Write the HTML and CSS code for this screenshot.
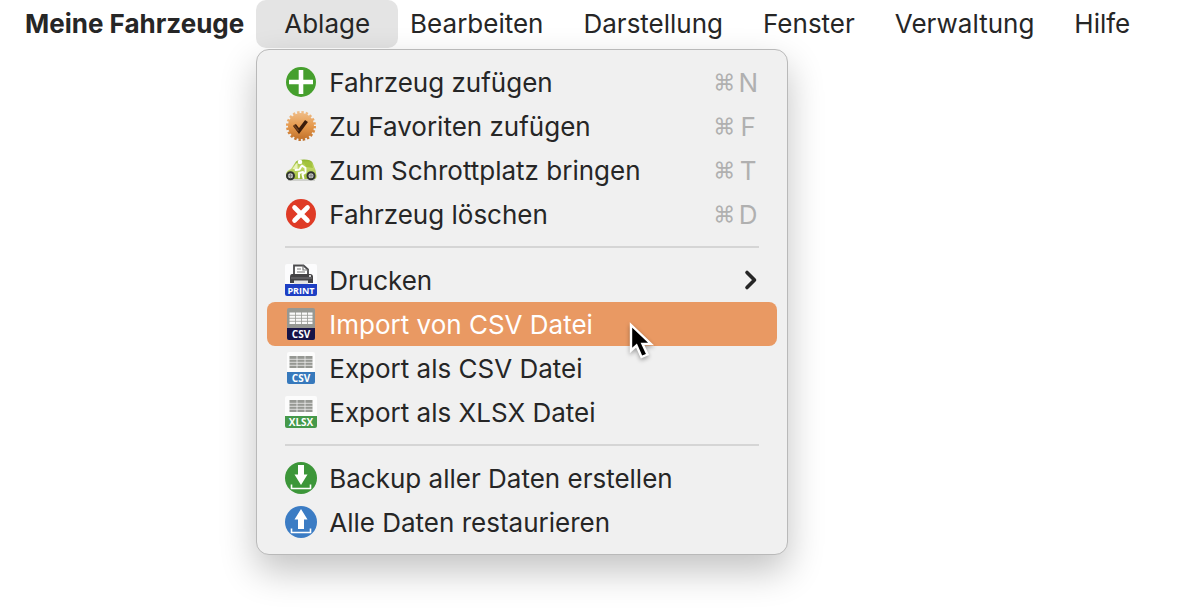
FILE: index.html
```html
<!DOCTYPE html>
<html lang="de">
<head>
<meta charset="utf-8">
<meta name="viewport" content="width=device-width, initial-scale=1">
<title>Meine Fahrzeuge</title>
<link rel="stylesheet" href="styles.css">
</head>
<body>
<nav class="menubar" aria-label="Hauptmenü">
  <button class="bar-item app-name" type="button">Meine Fahrzeuge</button>
  <div class="bar-group">
    <button class="bar-item active" type="button" aria-haspopup="true" aria-expanded="true">Ablage</button>
    <div class="menu" role="menu">
      <button class="item" type="button" role="menuitem">
        <svg class="icon" viewBox="0 0 32 32" aria-hidden="true"><circle cx="16" cy="16" r="15" fill="#459f2d"/><path d="M16 4v24M4 16h24" stroke="#fff" stroke-width="4.6"/></svg>
        <span class="label">Fahrzeug zufügen</span><span class="keys"><span class="command">⌘</span><span class="key">N</span></span>
      </button>
      <button class="item" type="button" role="menuitem">
        <svg class="icon" viewBox="0 0 32 32" aria-hidden="true">
          <defs><linearGradient id="seal" gradientUnits="userSpaceOnUse" x1="0" y1="2" x2="0" y2="30"><stop offset="0" stop-color="#efbd88"/><stop offset=".5" stop-color="#e5994d"/><stop offset="1" stop-color="#c0702a"/></linearGradient></defs>
          <circle cx="16" cy="16" r="13" fill="url(#seal)"/>
          <circle cx="16" cy="16" r="13.5" fill="none" stroke="url(#seal)" stroke-width="3" stroke-dasharray="2.4 1.839"/>
          <path d="M9.5 15l4.500 6L21.500 11" fill="none" stroke="#3b1d0b" stroke-width="3.6"/>
          <path d="M9 15l4.500 6" fill="none" stroke="#70401f" stroke-width="1.5"/>
        </svg>
        <span class="label">Zu Favoriten zufügen</span><span class="keys"><span class="command">⌘</span><span class="key">F</span></span>
      </button>
      <button class="item" type="button" role="menuitem">
        <svg class="icon" viewBox="0 0 32 32" aria-hidden="true">
          <defs><linearGradient id="car" x1="0" y1="0" x2="0" y2="1"><stop offset="0" stop-color="#8fb52c"/><stop offset=".4" stop-color="#c3d96a"/><stop offset="1" stop-color="#9dba3c"/></linearGradient></defs>
          <path d="M1 20Q1.500 16.500 6 15l5-7.500Q13 5.500 19 5.500q7 0 8.500 3L30.500 16l1 6q0 3-2 3H3q-2 0-2-5z" fill="url(#car)"/>
          <path d="M7.500 15L11 9.500l1.500-.5v6z" fill="#e9f3bb"/>
          <path d="M19 8q6-1 7.500 1.500l1.500 4.500-7-1z" fill="#a3c33d"/>
          <circle cx="15" cy="8" r="2.300" fill="#fff"/>
          <path d="M17 11.500l3.500 2.500v4.500l-3 2 1 4M16.500 12l-2 3.500-4 .5M18 18l-4 1v4.500" fill="none" stroke="#fff" stroke-width="1.900" stroke-linecap="round" stroke-linejoin="round"/>
          <path d="M3 26h27" stroke="#aeb0a9" stroke-width="1"/>
          <g fill="#c8cac6" stroke="#303330" stroke-width="2"><circle cx="5.500" cy="21.800" r="3.500"/><circle cx="26" cy="21.800" r="3.500"/></g>
          <path d="M5.500 19.500v4.600M3.200 21.800h4.600M26 19.500v4.600M23.700 21.800h4.600" stroke="#777" stroke-width=".8"/>
        </svg>
        <span class="label">Zum Schrottplatz bringen</span><span class="keys"><span class="command">⌘</span><span class="key">T</span></span>
      </button>
      <button class="item" type="button" role="menuitem">
        <svg class="icon" viewBox="0 0 32 32" aria-hidden="true"><circle cx="16" cy="16" r="15" fill="#df3b26"/><path d="M9.500 9.500l13 13m0-13l-13 13" stroke="#fff" stroke-width="4.600" stroke-linecap="round"/></svg>
        <span class="label">Fahrzeug löschen</span><span class="keys"><span class="command">⌘</span><span class="key">D</span></span>
      </button>
      <hr class="rule">
      <button class="item" type="button" role="menuitem" aria-haspopup="true">
        <svg class="icon" viewBox="0 0 32 32" aria-hidden="true">
          <rect width="32" height="32" rx="2" fill="#fcfcfd"/>
          <path d="M9 10V1.500h9.500L23 5.500V10" fill="#fff" stroke="#4b4b4d" stroke-width="1.800"/>
          <path d="M18 1.500V6h5M12 5h4M12 8h8" fill="none" stroke="#777" stroke-width="1.200"/>
          <path d="M7 10h18q3 0 3 3v6H5v-6q0-3 2-3z" fill="#444345"/><path d="M6 14h21" stroke="#77777a"/>
          <circle cx="25" cy="12" r="1" fill="#fff"/><path d="M9 16.500h14V20H9z" fill="#e2e2e2"/>
          <path d="M0 20h32v10q0 2-2 2H2q-2 0-2-2z" fill="#1e3fc4"/>
          <text class="badge" x="16" y="29.500" font-size="9">PRINT</text>
        </svg>
        <span class="label">Drucken</span>
        <svg class="chevron" viewBox="0 0 16 22" aria-hidden="true"><path d="M4 3.500l7.500 7.500L4 18.500" fill="none" stroke="#262626" stroke-width="3.600" stroke-linecap="round" stroke-linejoin="round"/></svg>
      </button>
      <button class="item selected" type="button" role="menuitem">
        <svg class="icon" viewBox="0 0 32 32" aria-hidden="true">
          <rect x="2" width="28" height="32" rx="2" fill="#969893"/>
          <path d="M4.500 4.500h23v11.500h-23z" fill="#fafafa"/>
          <path d="M4 7.300h24M4 10.300h24M4 13.300h24M10.500 4v12M16.500 4v12M22.500 4v12" stroke="#969893" stroke-width=".8"/>
          <path d="M2 20h28v10q0 2-2 2H4q-2 0-2-2z" fill="#161447"/>
          <text class="badge" x="16" y="29.500" font-size="10">CSV</text>
        </svg>
        <span class="label">Import von CSV Datei</span>
        <svg class="cursor" viewBox="0 0 28 44" aria-hidden="true"><path d="M3 4v25.500l5.500-5 5 11.500 6-2.500L14.500 23h8.500z" fill="#000" stroke="#fff" stroke-width="2.400"/></svg>
      </button>
      <button class="item" type="button" role="menuitem">
        <svg class="icon" viewBox="0 0 32 32" aria-hidden="true">
          <rect x="2" width="28" height="32" rx="2" fill="#fcfcfc"/>
          <path d="M4.500 4h23v12h-23z" fill="#969893"/><path d="M4 7.300h24M4 10.300h24M4 13.300h24M12 4v12M20 4v12" stroke="#eee" stroke-width=".8"/>
          <path d="M2 20h28v10q0 2-2 2H4q-2 0-2-2z" fill="#3779bc"/>
          <text class="badge" x="16" y="29.500" font-size="10">CSV</text>
        </svg>
        <span class="label">Export als CSV Datei</span>
      </button>
      <button class="item" type="button" role="menuitem">
        <svg class="icon" viewBox="0 0 32 32" aria-hidden="true">
          <rect width="32" height="32" rx="2" fill="#fcfcfc"/>
          <path d="M4.500 4h23v12h-23z" fill="#969893"/><path d="M4 7.300h24M4 10.300h24M4 13.300h24M12 4v12M20 4v12" stroke="#eee" stroke-width=".8"/>
          <path d="M0 20h32v10q0 2-2 2H2q-2 0-2-2z" fill="#45994a"/>
          <text class="badge" x="16" y="29.500" font-size="10">XLSX</text>
        </svg>
        <span class="label">Export als XLSX Datei</span>
      </button>
      <hr class="rule">
      <button class="item" type="button" role="menuitem">
        <svg class="icon" viewBox="0 0 32 32" aria-hidden="true"><circle cx="16" cy="16" r="16" fill="#3c9639"/><path d="M13 3h6v9.500h3.500L16 23 9.500 12.500H13z" fill="#fff"/><path d="M6.500 22.500v4h19v-4" fill="none" stroke="#fff" stroke-width="1.600"/></svg>
        <span class="label">Backup aller Daten erstellen</span>
      </button>
      <button class="item" type="button" role="menuitem">
        <svg class="icon" viewBox="0 0 32 32" aria-hidden="true"><circle cx="16" cy="16" r="16" fill="#3b7cc4"/><path d="M16 3l6.500 10.500H19V23h-6v-9.500H9.500z" fill="#fff"/><path d="M6.500 22.500v4h19v-4" fill="none" stroke="#fff" stroke-width="1.600"/></svg>
        <span class="label">Alle Daten restaurieren</span>
      </button>
    </div>
  </div>
  <button class="bar-item" type="button">Bearbeiten</button>
  <button class="bar-item" type="button">Darstellung</button>
  <button class="bar-item" type="button">Fenster</button>
  <button class="bar-item" type="button">Verwaltung</button>
  <button class="bar-item" type="button">Hilfe</button>
</nav>
</body>
</html>
```
FILE: styles.css
```css
* {
  box-sizing: border-box;
}

body {
  min-height: 100vh;
  margin: 0;
  background: #fff;
  color: #262626;
  font-family: Inter, "Liberation Sans", sans-serif;
  font-size: 26px;
}

button {
  border: 0;
  background: none;
  color: inherit;
  font: inherit;
  white-space: nowrap;
}

.menubar {
  display: flex;
  padding-left: 5px;
}

.bar-item {
  height: 48px;
  padding: 0 20px 2px;
}

.app-name {
  font-weight: 700;
}

.bar-group {
  position: relative;
  margin: 0 -8px;
}

.active {
  padding: 0 28px 2px;
  border-radius: 10px;
  background: #e4e4e4;
}

.menu {
  position: absolute;
  top: 100%;
  left: 0;
  z-index: 1;
  min-width: 532px;
  margin-top: 1px;
  padding: 10px;
  border: 1px solid #b9b9b9;
  border-radius: 13px;
  background: #f0f0f0;
  box-shadow: 0 16px 36px rgba(0, 0, 0, 0.24);
}

.item {
  position: relative;
  display: flex;
  align-items: center;
  gap: 12px;
  width: 100%;
  height: 44px;
  padding: 0 18px;
  border-radius: 8px;
  text-align: left;
}

.selected {
  background: #e99963;
  color: #fff;
}

.icon {
  flex: none;
  width: 32px;
  height: 32px;
}

.label {
  flex: 1;
}

.keys {
  display: flex;
  align-items: center;
  gap: 2px;
  color: #b0b0b0;
}

.command {
  font-size: 22px;
}

.key {
  width: 22px;
  text-align: center;
}

.chevron {
  width: 16px;
  height: 22px;
}

.cursor {
  position: absolute;
  top: 19px;
  left: 361px;
  z-index: 2;
  width: 28px;
  height: 44px;
  filter: drop-shadow(0 2px 2px rgba(0, 0, 0, 0.35));
}

.rule {
  height: 2px;
  margin: 10px 18px;
  border: 0;
  background: #d5d5d5;
}

.badge {
  fill: #fff;
  font-family: "Open Sans", sans-serif;
  font-weight: 700;
  text-anchor: middle;
}
```
